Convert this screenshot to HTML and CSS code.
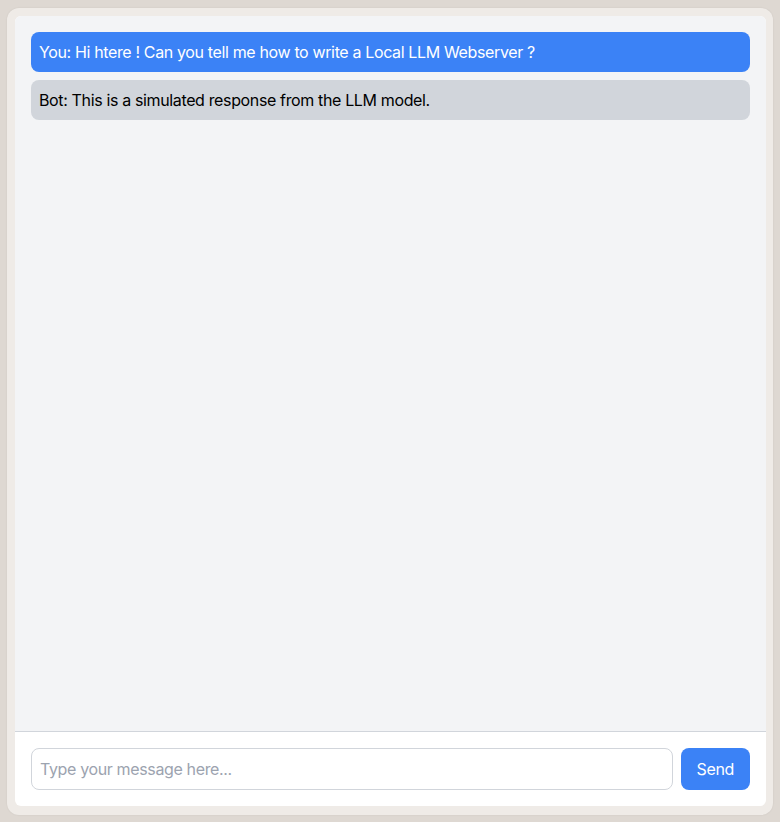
FILE: index.html
```html
<!DOCTYPE html>
<html lang="en">
<head>
<meta charset="utf-8">
<title>Local LLM Chat</title>
<link rel="stylesheet" href="styles.css">
</head>
<body>
<div class="frame">
  <div class="chat">
    <div class="messages">
      <div class="msg user">You: Hi htere ! Can you tell me how to write a Local LLM Webserver ?</div>
      <div class="msg bot">Bot: This is a simulated response from the LLM model.</div>
    </div>
    <div class="composer">
      <input class="input" type="text" placeholder="Type your message here...">
      <button class="send">Send</button>
    </div>
  </div>
</div>
</body>
</html>
```

FILE: styles.css
```css
* { box-sizing: border-box; }
html, body { height: 100%; }
body {
  margin: 0;
  background: #ded8d2;
  font-family: Inter, "Noto Sans", sans-serif;
  letter-spacing: -0.36px;
  padding: 8px 7px 7px 7px;
}
.frame {
  height: 100%;
  background: #efebe7;
  border-radius: 12px;
  padding: 8px 7px 9px 8px;
  box-shadow: 0 0 2px rgba(0,0,0,0.08);
}
.chat {
  height: 100%;
  display: flex;
  flex-direction: column;
  background: #ffffff;
  border-radius: 6px;
  overflow: hidden;
}
.messages {
  flex: 1;
  background: #f3f4f6;
  padding: 16px;
  display: flex;
  flex-direction: column;
  gap: 8px;
  border-bottom: 1px solid #d1d5db;
}
.msg {
  padding: 8px;
  border-radius: 8px;
  font-size: 16px;
  line-height: 24px;
}
.user { background: #3b82f6; color: #ffffff; }
.bot { background: #d1d5db; color: #000000; }
.composer {
  display: flex;
  gap: 8px;
  padding: 16px;
}
.input {
  flex: 1;
  height: 42px;
  border: 1px solid #d1d5db;
  border-radius: 8px;
  padding: 8px;
  font-family: inherit;
  font-size: 16px;
  letter-spacing: -0.36px;
  color: #111827;
  background: #fff;
  outline: none;
}
.input::placeholder { color: #9ca3af; }
.send {
  height: 42px;
  padding: 8px 16px;
  border: none;
  border-radius: 8px;
  background: #3b82f6;
  color: #ffffff;
  font-family: inherit;
  font-size: 16px;
  letter-spacing: -0.36px;
}
```
